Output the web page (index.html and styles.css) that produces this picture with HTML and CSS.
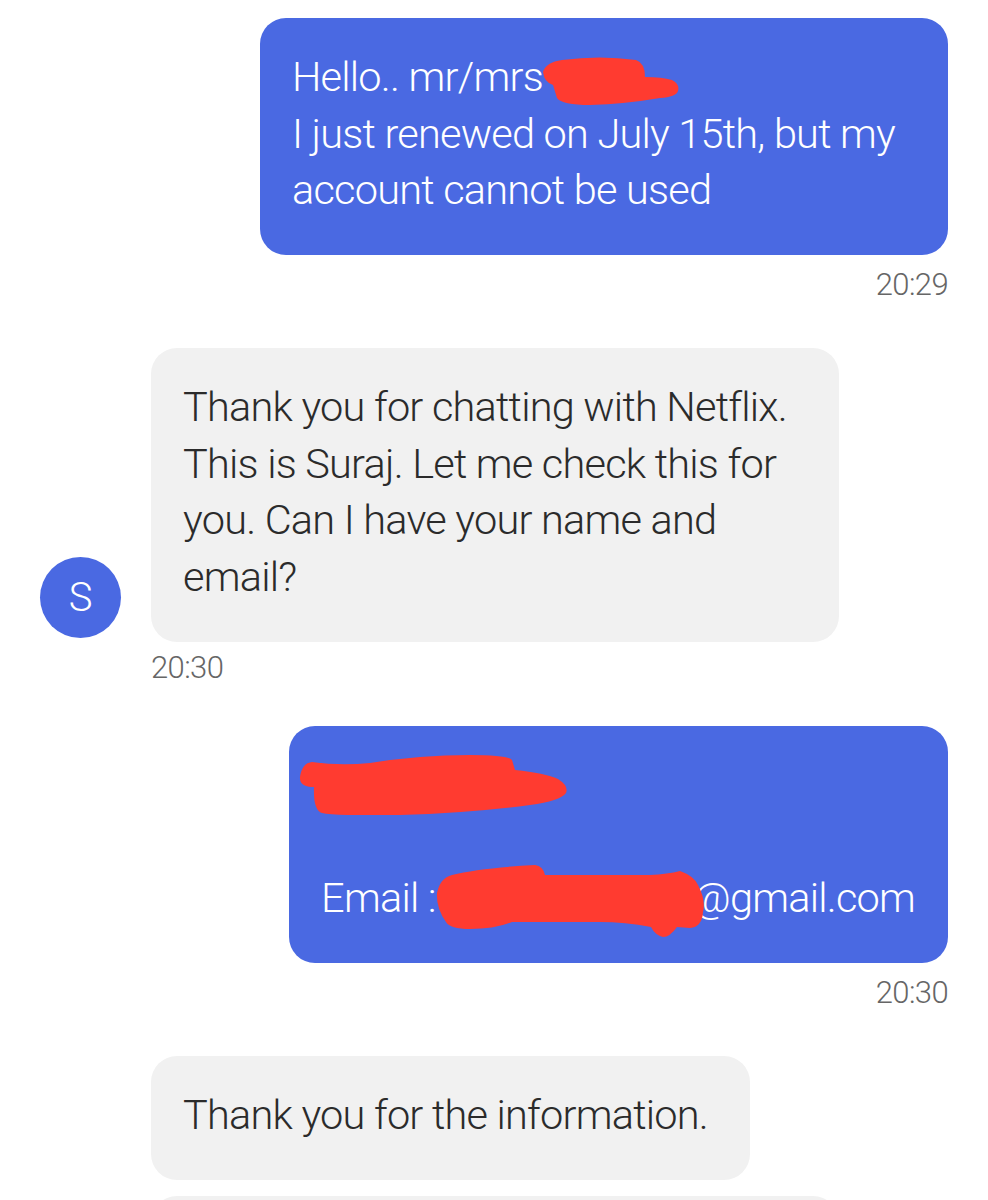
FILE: index.html
```html
<!DOCTYPE html>
<html lang="en">
<head>
    <meta charset="UTF-8">
    <meta name="viewport" content="width=device-width, initial-scale=1.0">
    <title>Chat</title>
    <link rel="stylesheet" href="styles.css">
</head>
<body>
    <div class="chat">
        <div class="msg sent">
            <div class="bubble bubble-blue first-sent">
                Hello.. mr/mrs<br>
                I just renewed on July 15th, but my account cannot be used
                <svg class="scribble scribble-name" viewBox="541 57 139 48">
                    <path d="M543 72 Q546 62 562 60 Q600 55 636 60 Q645 63 645 77 Q662 77 672 80 Q680 84 678 91 Q676 97 660 98 Q625 104 590 105 Q562 105 557 98 L553 85 Q544 82 543 72 Z"/>
                </svg>
            </div>
            <div class="time">20:29</div>
        </div>

        <div class="msg received">
            <div class="with-avatar">
                <div class="avatar">S</div>
                <div class="bubble bubble-grey">Thank you for chatting with Netflix. This is Suraj. Let me check this for you. Can I have your name and email?</div>
            </div>
            <div class="time">20:30</div>
        </div>

        <div class="msg sent">
            <div class="bubble bubble-blue">
                &nbsp;<br>
                &nbsp;<br>
                Email :<span class="email-gap"></span>@gmail.com
                <svg class="scribble scribble-fullname" viewBox="298 755 270 60">
                    <path d="M300 777 Q302 763 312 762 Q340 766 370 763 Q420 755 470 755 Q508 755 512 760 L515 770 Q545 773 558 779 Q569 786 566 793 Q560 801 530 805 Q470 813 400 815 Q335 816 322 813 Q313 810 314 787 Q299 787 300 777 Z"/>
                </svg>
                <svg class="scribble scribble-email" viewBox="436 865 268 72">
                    <path d="M437 893 Q440 878 452 875 Q480 868 535 865 Q543 866 545 875 L650 875 Q668 874 680 871 Q694 876 698 885 Q706 900 703 912 Q702 927 690 928 L677 927 Q670 937 663 937 Q655 935 651 927 Q625 922 600 922 L512 922 Q495 929 470 929 Q450 929 446 922 Q436 908 437 893 Z"/>
                </svg>
            </div>
            <div class="time">20:30</div>
        </div>

        <div class="msg received indented">
            <div class="bubble bubble-grey short">Thank you for the information.</div>
        </div>

        <div class="msg received indented next">
            <div class="bubble bubble-grey">&nbsp;</div>
        </div>
    </div>
</body>
</html>
```

FILE: styles.css
```css
html, body {
    margin: 0;
    padding: 0;
    background: white;
}
.chat {
    box-sizing: border-box;
    height: 1200px;
    overflow: hidden;
    padding: 18px 40px 0 40px;
    font-family: Roboto, "Liberation Sans", sans-serif;
    font-weight: 300;
}
.msg {
    display: flex;
    flex-direction: column;
}
.sent {
    align-items: flex-end;
    margin-bottom: 45px;
}
.received {
    align-items: flex-start;
    margin-bottom: 40px;
}
.indented {
    padding-left: 111px;
    margin-bottom: 16px;
}
.bubble {
    position: relative;
    box-sizing: border-box;
    max-width: 688px;
    padding: 31px 33px 36.5px 32px;
    border-radius: 26px;
    font-size: 41.5px;
    letter-spacing: -0.78px;
    line-height: 56.5px;
}
.bubble-blue {
    background: #4a69e2;
    color: white;
}
.bubble-grey {
    background: #f1f1f1;
    color: #2b2b2b;
}
.short {
    padding-right: 42px;
}
.next .bubble {
    width: 688px;
}
.with-avatar {
    display: flex;
    align-items: flex-end;
    gap: 30px;
}
.avatar {
    width: 81px;
    height: 81px;
    margin-bottom: 4px;
    border-radius: 50%;
    background: #4a69e2;
    color: white;
    font-size: 40px;
    line-height: 81px;
    text-align: center;
}
.time {
    margin-top: 12px;
    font-size: 31px;
    letter-spacing: -0.6px;
    line-height: 36px;
    color: #666;
}
.received .time {
    margin-top: 8px;
    margin-left: 111px;
}
.email-gap {
    display: inline-block;
    width: 257px;
}
.scribble {
    position: absolute;
    fill: #ff3b30;
}
.scribble-name {
    left: 281px;
    top: 39px;
    width: 139px;
    height: 48px;
}
.scribble-fullname {
    left: 9px;
    top: 29px;
    width: 270px;
    height: 60px;
}
.scribble-email {
    left: 147px;
    top: 139px;
    width: 268px;
    height: 72px;
}
```
